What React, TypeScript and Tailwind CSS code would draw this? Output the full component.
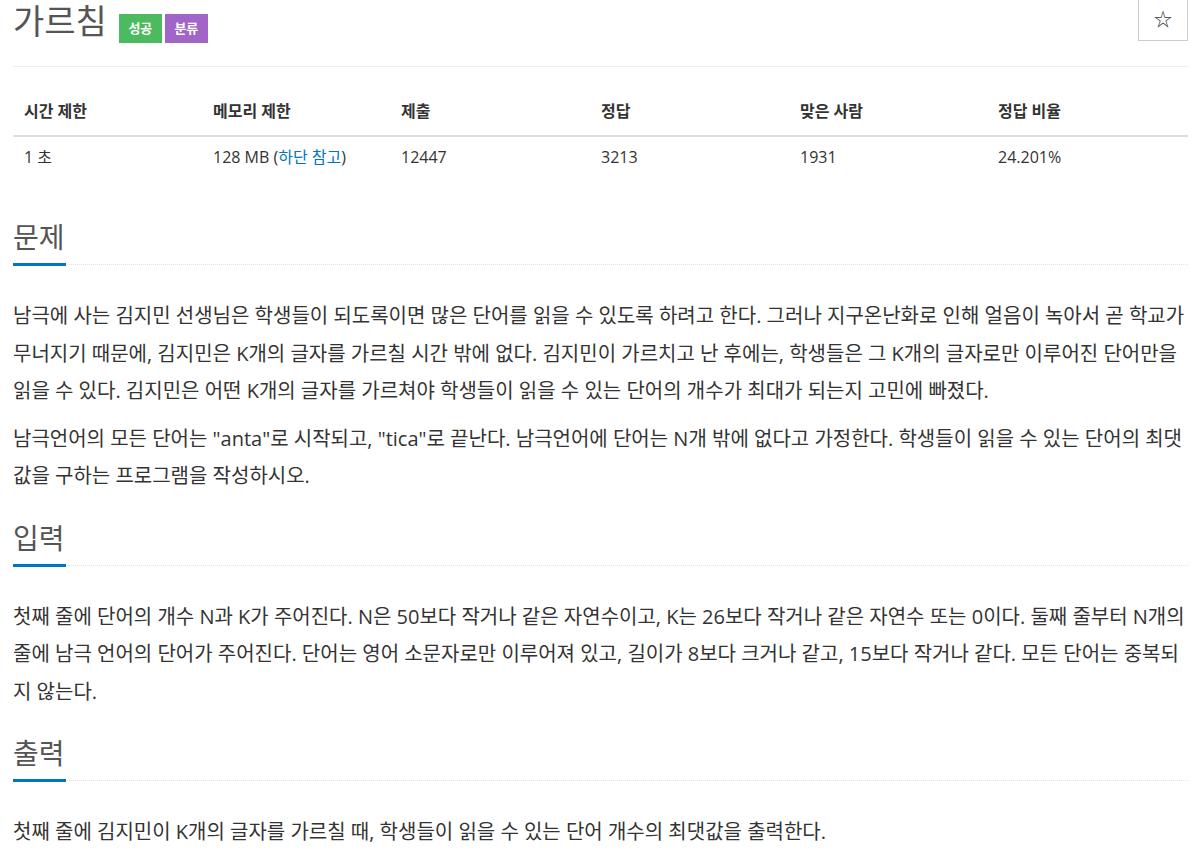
const font = { fontFamily: '"Open Sans", "Noto Sans CJK KR", sans-serif' };

const stats = [
  { label: "시간 제한", value: <>1 초</> },
  {
    label: "메모리 제한",
    value: (
      <>
        128 MB (<span className="text-[#0076c0]">하단 참고</span>)
      </>
    ),
  },
  { label: "제출", value: <>12447</> },
  { label: "정답", value: <>3213</> },
  { label: "맞은 사람", value: <>1931</> },
  { label: "정답 비율", value: <>24.201%</> },
];

function Section({ title, children }: { title: string; children: React.ReactNode }) {
  return (
    <section className="mb-[25px]">
      <div className="border-b border-dotted border-[#dfe3e8] mb-[32px]">
        <h2 className="inline-block text-[28px] leading-[36px] font-normal text-[#555] pb-[8px] border-b-[3px] border-[#0076c0] -mb-[2px] pr-[1px]">
          {title}
        </h2>
      </div>
      <div className="text-[20px] leading-[37.5px] text-[#333]">{children}</div>
    </section>
  );
}

export default function App() {
  return (
    <div style={font} className="w-[1192px] min-h-[850px] bg-white pl-[13px] pr-[4px] overflow-hidden">
      <div className="flex items-start justify-between border-b border-[#eee] h-[67px]">
        <div className="flex items-start">
          <h1 className="text-[34px] leading-[42px] font-normal text-[#555]">가르침</h1>
          <div className="flex gap-[3px] ml-[12px] mt-[14px]">
            <span className="h-[29px] w-[43px] flex items-center justify-center bg-[#4cba5f] text-white text-[13px] font-bold">
              성공
            </span>
            <span className="h-[29px] w-[43px] flex items-center justify-center bg-[#a065c7] text-white text-[13px] font-bold">
              분류
            </span>
          </div>
        </div>
        <button className="-mt-[2px] h-[43px] w-[50px] border border-[#ccc] bg-white flex items-center justify-center text-[18px] text-[#333]">
          ☆
        </button>
      </div>

      <div className="mt-[22px] grid grid-cols-[189px_188px_200px_199px_198px_1fr] text-[16px] text-[#333]">
        {stats.map((s) => (
          <div key={s.label} className="px-[11px] pt-[10px] pb-[11px] leading-[25px] font-bold border-b-2 border-[#ddd]">
            {s.label}
          </div>
        ))}
        {stats.map((s) => (
          <div key={s.label + "v"} className="px-[11px] py-[8px] leading-[25px]">
            {s.value}
          </div>
        ))}
      </div>

      <div className="mt-[41px]">
        <Section title="문제">
          <p className="mb-[10px]">
            남극에 사는 김지민 선생님은 학생들이 되도록이면 많은 단어를 읽을 수 있도록 하려고 한다. 그러나 지구온난화로 인해 얼음이 녹아서 곧 학교가 무너지기 때문에, 김지민은 K개의 글자를 가르칠 시간 밖에 없다. 김지민이 가르치고 난 후에는, 학생들은 그 K개의 글자로만 이루어진 단어만을 읽을 수 있다. 김지민은 어떤 K개의 글자를 가르쳐야 학생들이 읽을 수 있는 단어의 개수가 최대가 되는지 고민에 빠졌다.
          </p>
          <p className="mb-[10px]">
            남극언어의 모든 단어는 "anta"로 시작되고, "tica"로 끝난다. 남극언어에 단어는 N개 밖에 없다고 가정한다. 학생들이 읽을 수 있는 단어의 최댓값을 구하는 프로그램을 작성하시오.
          </p>
        </Section>
        <Section title="입력">
          <p className="mb-[10px]">
            첫째 줄에 단어의 개수 N과 K가 주어진다. N은 50보다 작거나 같은 자연수이고, K는 26보다 작거나 같은 자연수 또는 0이다. 둘째 줄부터 N개의 줄에 남극 언어의 단어가 주어진다. 단어는 영어 소문자로만 이루어져 있고, 길이가 8보다 크거나 같고, 15보다 작거나 같다. 모든 단어는 중복되지 않는다.
          </p>
        </Section>
        <Section title="출력">
          <p className="mb-[10px]">
            첫째 줄에 김지민이 K개의 글자를 가르칠 때, 학생들이 읽을 수 있는 단어 개수의 최댓값을 출력한다.
          </p>
        </Section>
      </div>
    </div>
  );
}
